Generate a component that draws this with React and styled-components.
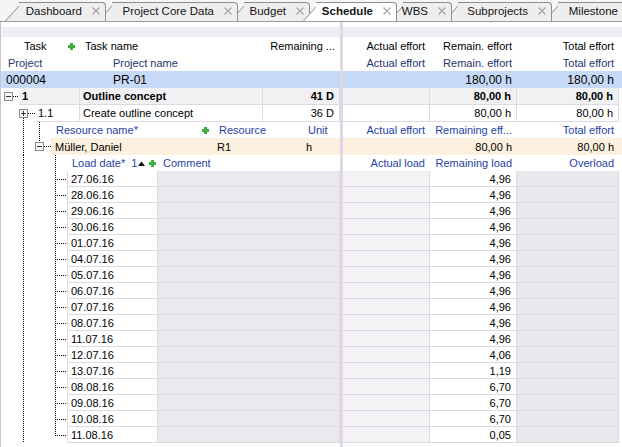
import React from "react";
import styled, { createGlobalStyle } from "styled-components";

const GRID = "#dcdae0";
const TASK_BG = "#f1f0f3";
const SEL_BG = "#c6d9f7";
const RES_BG = "#fdf0de";
const COMMENT_BG = "#ebe9ed";
const ACTUAL_BG = "#f5f2f5";
const OVER_BG = "#eae8ec";
const NAVY = "#27336b";
const BLUE = "#1f3fa5";

const tabs = [
  { label: "Dashboard", w: 101 },
  { label: "Project Core Data", w: 140 },
  { label: "Budget", w: 80 },
  { label: "Schedule", w: 95, active: true },
  { label: "WBS", w: 63 },
  { label: "Subprojects", w: 108 },
  { label: "Milestone", w: 98 },
];

const dates = [
  "27.06.16", "28.06.16", "29.06.16", "30.06.16", "01.07.16", "04.07.16",
  "05.07.16", "06.07.16", "07.07.16", "08.07.16", "11.07.16", "12.07.16",
  "13.07.16", "08.08.16", "09.08.16", "10.08.16", "11.08.16",
];
const loads = [
  ...Array(11).fill("4,96"), "4,06", "1,19", "6,70", "6,70", "6,70", "0,05",
];

const RIGHT = [87, 87, 102];

const GlobalStyle = createGlobalStyle`
  html, body { margin: 0; padding: 0; background: #fff; }
  body { font-family: "Liberation Sans", Arial, sans-serif; font-size: 11px; color: #000; }
  * { box-sizing: border-box; }
`;

const Screen = styled.div`
  width: 622px;
  height: 447px;
  overflow: hidden;
  display: flex;
  flex-direction: column;
  background: #fff;
`;

const TabStrip = styled.div`
  flex: none;
  height: 22px;
  display: flex;
  align-items: flex-end;
  padding-left: 5px;
  background: #f5f5f5;
  border-bottom: 1px solid #9c9c9c;
  overflow: hidden;
  isolation: isolate;
`;

const Tab = styled.div`
  position: relative;
  z-index: ${(p) => p.$z};
  flex: none;
  width: ${(p) => p.$w}px;
  height: ${(p) => (p.$active ? 20 : 19)}px;
  margin-left: ${(p) => (p.$first ? 0 : -8)}px;
  margin-bottom: ${(p) => (p.$active ? -1 : 0)}px;
  display: flex;
  align-items: center;
  justify-content: flex-end;
  gap: 10px;
  padding: 0 6px ${(p) => (p.$active ? 2 : 1)}px 0;
  font-size: 11.5px;
  font-weight: ${(p) => (p.$active ? 700 : 400)};
  color: #151515;
  white-space: nowrap;

  &::before,
  &::after {
    content: "";
    position: absolute;
    z-index: -1;
    top: 0;
    bottom: 0;
    background: ${(p) => (p.$active ? "#fff" : "#eeeeee")};
    border-top: 1px solid #8d8d8d;
  }
  &::before {
    left: 0;
    width: 26px;
    border-left: 1px solid #8d8d8d;
    transform: skewX(-42deg);
    transform-origin: bottom left;
  }
  &::after {
    left: 14px;
    right: 0;
    border-right: 1px solid #8d8d8d;
    border-top-right-radius: 4px;
  }
`;

const CloseMark = () => (
  <svg width="8" height="8" viewBox="0 0 8 8" style={{ flex: "none" }}>
    <path d="M0.5 0.5L7.5 7.5M7.5 0.5L0.5 7.5" stroke="#a4a4a4" strokeWidth="1.1" />
  </svg>
);

const Body = styled.div`
  flex: 1;
  min-height: 0;
  display: flex;
`;

const LeftPane = styled.div`
  flex: none;
  width: 340px;
  display: flex;
  flex-direction: column;
  border-left: 1px solid #c9c9cc;
`;

const RightPane = styled.div`
  flex: 1;
  display: flex;
  flex-direction: column;
`;

const Splitter = styled.div`
  flex: none;
  width: 3px;
  background: #ddd8e3;
`;

const TopBand = styled.div`
  flex: none;
  height: 15px;
  background: linear-gradient(#fff 0 5px, #edeff4 5px);
`;

const Row = styled.div`
  flex: none;
  display: flex;
  height: ${(p) => p.$h}px;
  background: ${(p) => p.$bg || "#fff"};
`;

const Cell = styled.div`
  flex: none;
  width: ${(p) => p.$w}px;
  display: flex;
  align-items: center;
  gap: 4px;
  justify-content: ${(p) =>
    p.$right ? "flex-end" : p.$split ? "space-between" : "flex-start"};
  padding: 0 ${(p) => (p.$right || p.$split ? 5 : 0)}px 0 ${(p) => p.$pl ?? 5}px;
  background: ${(p) => p.$bg || "transparent"};
  color: ${(p) => p.$tone || "#000"};
  font-weight: ${(p) => (p.$bold ? 700 : 400)};
  font-size: ${(p) => p.$size || 11}px;
  white-space: nowrap;
  overflow: hidden;
  border-right: ${(p) => (p.$grid ? `1px solid ${GRID}` : "none")};
  border-bottom: ${(p) => (p.$grid ? `1px solid ${GRID}` : "none")};
  border-left: ${(p) => (p.$lead ? `1px solid ${GRID}` : "none")};
`;

const Label = styled.span`
  display: inline-flex;
  align-items: center;
  gap: 1px;
`;

const Filler = styled.div`
  flex: 1;
  background: #fff;
`;

const Gutter = styled.svg`
  flex: none;
  display: block;
`;

const PlusIcon = () => (
  <svg width="7" height="7" viewBox="0 0 7 7" style={{ flex: "none" }}>
    <path d="M2 0h3v2h2v3H5v2H2V5H0V2h2z" fill="#3fae3f" />
  </svg>
);

const SortUp = () => (
  <svg width="7" height="5" viewBox="0 0 7 5">
    <path d="M0 5L3.5 0.5L7 5z" fill="#111" />
  </svg>
);

/* tree connectors, coordinates given in page x (pane content starts at x=1) */
function Tree({ w, h, v = [], stub, box }) {
  const cy = Math.floor(h / 2) + 0.5;
  const bt = Math.floor(h / 2) - 4;
  const yOf = (s) =>
    s === "top" ? 0 : s === "mid" ? cy : s === "bot" ? h : s === "boxTop" ? bt : bt + 9;
  return (
    <Gutter width={w - 1} height={h} viewBox={`0 0 ${w - 1} ${h}`}>
      <g transform="translate(-1 0)" stroke="#000" strokeDasharray="1 1" strokeWidth="1">
        {v.map(([x, a, b], i) => (
          <line key={i} x1={x + 0.5} x2={x + 0.5} y1={yOf(a)} y2={yOf(b)} />
        ))}
        {stub && <line x1={stub[0]} x2={stub[1]} y1={cy} y2={cy} />}
      </g>
      {box && (
        <g transform="translate(-1 0)">
          <rect x={box.x + 0.5} y={bt + 0.5} width="8" height="8" fill="#f6f6f6" stroke="#8e8e8e" />
          <line x1={box.x + 2} x2={box.x + 7} y1={bt + 4.5} y2={bt + 4.5} stroke="#333" />
          {!box.open && (
            <line x1={box.x + 4.5} x2={box.x + 4.5} y1={bt + 2} y2={bt + 7} stroke="#333" />
          )}
        </g>
      )}
    </Gutter>
  );
}

function RightCells({ values, tone, bold, size, bgs, grid }) {
  return values.map((v, i) => (
    <Cell
      key={i}
      $w={RIGHT[i]}
      $right
      $tone={tone}
      $bold={bold}
      $size={size}
      $bg={bgs ? bgs[i] : undefined}
      $grid={grid}
    >
      {v}
    </Cell>
  ));
}

export default function App() {
  return (
    <>
      <GlobalStyle />
      <Screen>
        <TabStrip>
          {tabs.map((t, i) => (
            <Tab
              key={t.label}
              $w={t.w}
              $first={i === 0}
              $active={t.active}
              $z={t.active ? 20 : 10 - i}
            >
              <span>{t.label}</span>
              <CloseMark />
            </Tab>
          ))}
        </TabStrip>
        <Body>
          <LeftPane>
            <TopBand />
            <Row $h={18}>
              <Cell $w={18} />
              <Cell $w={61} $split>
                <span>Task</span>
                <PlusIcon />
              </Cell>
              <Cell $w={183}>Task name</Cell>
              <Cell $w={77} $right>Remaining ...</Cell>
            </Row>
            <Row $h={16}>
              <Cell $w={107} $pl={7} $tone={NAVY}>Project</Cell>
              <Cell $w={232} $tone={NAVY}>Project name</Cell>
            </Row>
            <Row $h={17} $bg={SEL_BG}>
              <Cell $w={107} $pl={5} $size={12}>000004</Cell>
              <Cell $w={232} $size={12}>PR-01</Cell>
            </Row>
            <Row $h={17}>
              <Tree w={19} h={17} stub={[13, 19]} box={{ x: 4, open: true }} />
              <Cell $w={61} $pl={3} $bold $bg={TASK_BG} $grid>1</Cell>
              <Cell $w={183} $pl={3} $bold $bg={TASK_BG} $grid>Outline concept</Cell>
              <Cell $w={77} $right $bold $bg={TASK_BG} $grid>41 D</Cell>
            </Row>
            <Row $h={17}>
              <Tree w={35} h={17} v={[[23, "boxBot", "bot"]]} stub={[28, 35]} box={{ x: 19 }} />
              <Cell $w={45} $pl={3} $grid>1.1</Cell>
              <Cell $w={183} $pl={3} $grid>Create outline concept</Cell>
              <Cell $w={77} $right $grid>36 D</Cell>
            </Row>
            <Row $h={16}>
              <Tree w={51} h={16} v={[[23, "top", "bot"], [39, "top", "bot"]]} />
              <Cell $w={163} $split $tone={BLUE}>
                <span>Resource name*</span>
                <PlusIcon />
              </Cell>
              <Cell $w={89} $tone={BLUE}>Resource</Cell>
              <Cell $w={37} $tone={BLUE}>Unit</Cell>
            </Row>
            <Row $h={17}>
              <Tree
                w={51}
                h={17}
                v={[[23, "top", "bot"], [39, "top", "boxTop"]]}
                stub={[44, 51]}
                box={{ x: 35, open: true }}
              />
              <Cell $w={163} $pl={4} $bg={RES_BG}>Müller, Daniel</Cell>
              <Cell $w={89} $pl={3} $bg={RES_BG}>R1</Cell>
              <Cell $w={37} $pl={3} $bg={RES_BG}>h</Cell>
            </Row>
            <Row $h={16}>
              <Tree w={67} h={16} v={[[23, "top", "bot"], [55, "top", "bot"]]} />
              <Cell $w={91} $split $tone={BLUE}>
                <Label>
                  Load date*&nbsp;&nbsp;1<SortUp />
                </Label>
                <PlusIcon />
              </Cell>
              <Cell $w={182} $tone={BLUE}>Comment</Cell>
            </Row>
            {dates.map((d, i) => (
              <Row $h={16} key={d}>
                <Tree
                  w={67}
                  h={16}
                  v={[[23, "top", "bot"], [55, "top", i === dates.length - 1 ? "mid" : "bot"]]}
                  stub={[55, 67]}
                />
                <Cell $w={91} $pl={3} $grid $lead>{d}</Cell>
                <Cell $w={182} $bg={COMMENT_BG} $grid />
              </Row>
            ))}
            <Filler />
          </LeftPane>
          <Splitter />
          <RightPane>
            <TopBand />
            <Row $h={18}>
              <RightCells values={["Actual effort", "Remain. effort", "Total effort"]} />
            </Row>
            <Row $h={16}>
              <RightCells tone={NAVY} values={["Actual effort", "Remain. effort", "Total effort"]} />
            </Row>
            <Row $h={17} $bg={SEL_BG}>
              <RightCells size={12} values={["", "180,00 h", "180,00 h"]} />
            </Row>
            <Row $h={17}>
              <RightCells
                bold
                grid
                bgs={[TASK_BG, TASK_BG, TASK_BG]}
                values={["", "80,00 h", "80,00 h"]}
              />
            </Row>
            <Row $h={17}>
              <RightCells grid values={["", "80,00 h", "80,00 h"]} />
            </Row>
            <Row $h={16}>
              <RightCells tone={BLUE} values={["Actual effort", "Remaining eff...", "Total effort"]} />
            </Row>
            <Row $h={17} $bg={RES_BG}>
              <RightCells values={["", "80,00 h", "80,00 h"]} />
            </Row>
            <Row $h={16}>
              <RightCells tone={BLUE} values={["Actual load", "Remaining load", "Overload"]} />
            </Row>
            {loads.map((l, i) => (
              <Row $h={16} key={i}>
                <RightCells
                  grid
                  bgs={[ACTUAL_BG, "#fff", OVER_BG]}
                  values={["", l, ""]}
                />
              </Row>
            ))}
            <Filler />
          </RightPane>
        </Body>
      </Screen>
    </>
  );
}
